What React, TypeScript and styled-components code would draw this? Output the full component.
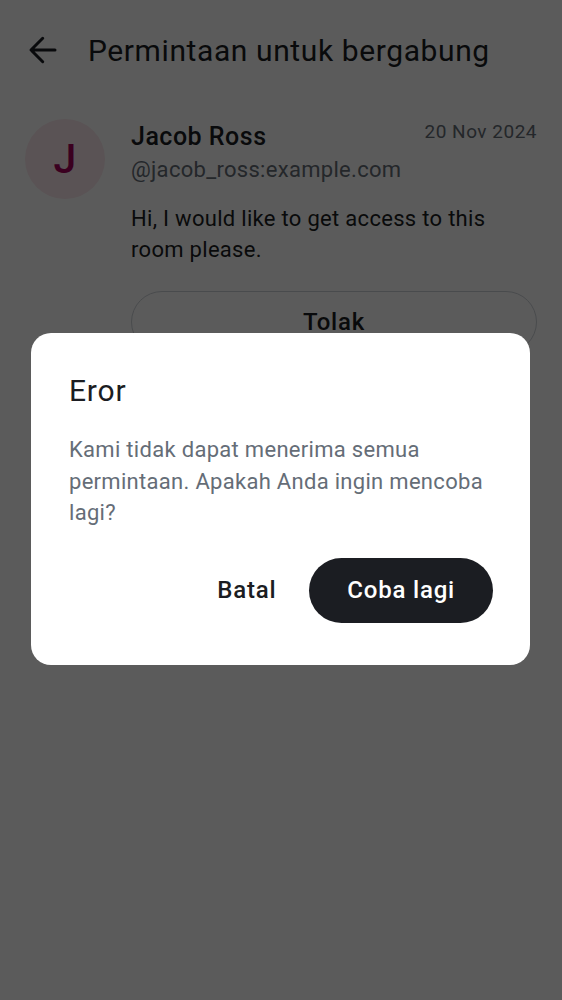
import React from "react";
import styled, { createGlobalStyle } from "styled-components";

const Global = createGlobalStyle`
  html, body { margin: 0; padding: 0; background: #ffffff; }
  body { font-family: Roboto, "Noto Sans", sans-serif; -webkit-font-smoothing: antialiased; }
  * { box-sizing: border-box; }
`;

const Page = styled.div`
  width: 562px;
  height: 1000px;
  background: #ffffff;
  position: relative;
  overflow: hidden;
`;

const TopBar = styled.header`
  display: flex;
  align-items: center;
  height: 100px;
  padding: 0 0 0 25px;
  gap: 27px;
`;

const BackButton = styled.button`
  border: none;
  background: none;
  padding: 0;
  width: 36px;
  height: 36px;
  display: flex;
  align-items: center;
  justify-content: center;
  color: #1b1d22;
`;

const Title = styled.h1`
  margin: 0;
  font-size: 30px;
  font-weight: 400;
  color: #1b1d22;
  letter-spacing: 0.6px;
`;

const Request = styled.section`
  display: flex;
  gap: 26px;
  padding: 19px 25px 0 25px;
`;

const Avatar = styled.div`
  flex: none;
  width: 80px;
  height: 80px;
  border-radius: 50%;
  background: #fbe8ed;
  color: #a5005a;
  display: flex;
  align-items: center;
  justify-content: center;
  font-size: 41px;
  font-weight: 500;
`;

const Body = styled.div`
  flex: 1;
  display: flex;
  flex-direction: column;
`;

const NameRow = styled.div`
  display: flex;
  justify-content: space-between;
  align-items: flex-start;
`;

const Name = styled.div`
  font-size: 25px;
  font-weight: 500;
  color: #1b1d22;
  line-height: 35px;
  letter-spacing: 0.5px;
`;

const DateText = styled.div`
  font-size: 19px;
  color: #656d77;
  line-height: 26px;
  letter-spacing: 0.5px;
`;

const Handle = styled.div`
  font-size: 22px;
  color: #656d77;
  line-height: 32px;
  letter-spacing: 0.3px;
`;

const Message = styled.p`
  margin: 17px 0 0 0;
  font-size: 22px;
  line-height: 31px;
  color: #1b1d22;
  letter-spacing: 0.3px;
`;

const OutlineButton = styled.button`
  margin-top: 26px;
  height: 62px;
  border-radius: 31px;
  border: 1px solid #cdd2d8;
  background: transparent;
  font-family: inherit;
  font-size: 24px;
  font-weight: 500;
  letter-spacing: 0.8px;
  color: #1b1d22;
`;

const Scrim = styled.div`
  position: absolute;
  inset: 0;
  background: rgba(0, 0, 0, 0.643);
  display: flex;
  align-items: center;
  justify-content: center;
`;

const Dialog = styled.div`
  width: 499px;
  margin-left: -1px;
  margin-top: -2px;
  background: #ffffff;
  border-radius: 20px;
  padding: 38px 37px 42px 38px;
  display: flex;
  flex-direction: column;
`;

const DialogTitle = styled.h2`
  margin: 0;
  font-size: 30px;
  font-weight: 400;
  line-height: 40px;
  letter-spacing: 0.8px;
  color: #1b1d22;
`;

const DialogText = styled.p`
  margin: 23px 0 0 0;
  font-size: 22px;
  line-height: 31.5px;
  color: #656d77;
  letter-spacing: 0.3px;
`;

const Actions = styled.div`
  margin-top: 29px;
  display: flex;
  justify-content: flex-end;
  align-items: center;
  gap: 33px;
`;

const TextButton = styled.button`
  border: none;
  background: none;
  padding: 0;
  font-family: inherit;
  font-size: 24px;
  font-weight: 500;
  letter-spacing: 0.8px;
  color: #1b1d22;
`;

const FilledButton = styled.button`
  border: none;
  background: #1b1d22;
  color: #ffffff;
  height: 65px;
  padding: 0 38px;
  border-radius: 33px;
  font-family: inherit;
  font-size: 24px;
  font-weight: 500;
  letter-spacing: 0.8px;
`;

export default function App() {
  return (
    <Page>
      <Global />
      <TopBar>
        <BackButton aria-label="Kembali">
          <svg width="36" height="36" viewBox="0 0 24 24" fill="none">
            <path d="M20 12H4.2M11.8 4.2 4 12l7.8 7.8" stroke="currentColor" strokeWidth="2" strokeLinecap="round" strokeLinejoin="round" />
          </svg>
        </BackButton>
        <Title>Permintaan untuk bergabung</Title>
      </TopBar>
      <Request>
        <Avatar>J</Avatar>
        <Body>
          <NameRow>
            <Name>Jacob Ross</Name>
            <DateText>20 Nov 2024</DateText>
          </NameRow>
          <Handle>@jacob_ross:example.com</Handle>
          <Message>Hi, I would like to get access to this room please.</Message>
          <OutlineButton>Tolak</OutlineButton>
        </Body>
      </Request>
      <Scrim>
        <Dialog role="alertdialog">
          <DialogTitle>Eror</DialogTitle>
          <DialogText>Kami tidak dapat menerima semua permintaan. Apakah Anda ingin mencoba lagi?</DialogText>
          <Actions>
            <TextButton>Batal</TextButton>
            <FilledButton>Coba lagi</FilledButton>
          </Actions>
        </Dialog>
      </Scrim>
    </Page>
  );
}
